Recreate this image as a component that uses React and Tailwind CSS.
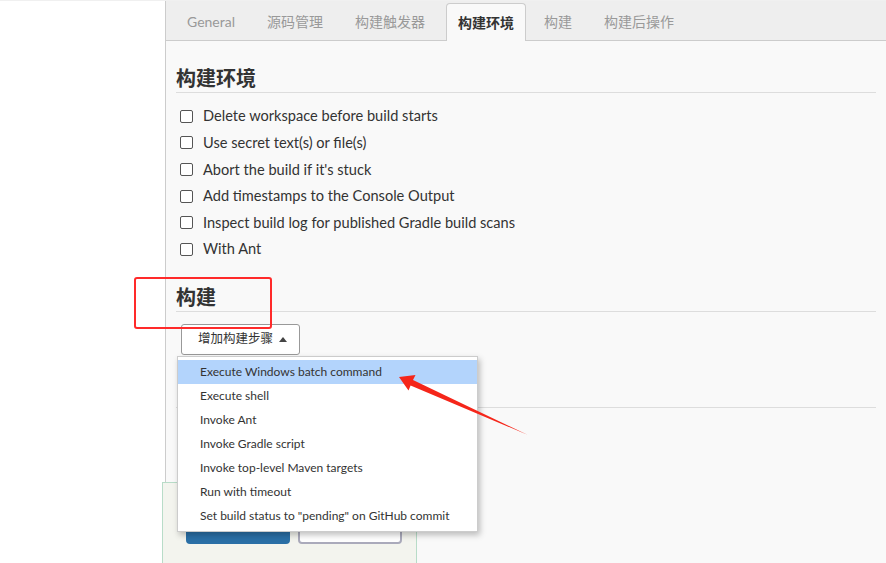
import React from "react";

const tabs = ["General", "源码管理", "构建触发器", "构建环境", "构建", "构建后操作"];
const options = [
  "Delete workspace before build starts",
  "Use secret text(s) or file(s)",
  "Abort the build if it's stuck",
  "Add timestamps to the Console Output",
  "Inspect build log for published Gradle build scans",
  "With Ant",
];
const steps = [
  "Execute Windows batch command",
  "Execute shell",
  "Invoke Ant",
  "Invoke Gradle script",
  "Invoke top-level Maven targets",
  "Run with timeout",
  'Set build status to "pending" on GitHub commit',
];

const font = { fontFamily: 'Lato, "Noto Sans CJK SC", sans-serif' };

const SectionTitle = ({ children, className = "" }) => (
  <div className={`h-[28px] text-[20px] leading-[27px] font-bold text-[#333] border-b border-[#ddd] ${className}`}>
    {children}
  </div>
);

const App = () => {
  return (
    <div style={font} className="relative w-[886px] h-[563px] overflow-hidden bg-white flex border-t border-[#f0f0f0]">
      <div className="w-[165px] shrink-0 bg-white" />

      <div className="flex-1 flex flex-col border-l border-[#ccc] bg-[#f9f9f9]">
        {/* tab bar */}
        <div className="h-[40px] bg-[#eee] border-b border-[#ccc] flex items-end pl-[10px] gap-[10px]">
          {tabs.map((t) =>
            t === "构建环境" ? (
              <div
                key={t}
                className="h-[38px] -mb-px -mr-[3px] px-[11px] flex items-center bg-[#f9f9f9] border border-b-0 border-[#ccc] rounded-t-[4px] text-[14px] font-semibold text-[#333]"
              >
                {t}
              </div>
            ) : (
              <div key={t} className="h-[38px] px-[11px] flex items-center text-[14px] text-[#999]">
                {t}
              </div>
            )
          )}
        </div>

        <div className="px-[10px]">
          <SectionTitle className="mt-[24px]">构建环境</SectionTitle>

          <div className="mt-[10px] pl-[4px]">
            {options.map((o) => (
              <label key={o} className="h-[26.6px] flex items-center gap-[10px] text-[14.6px] text-[#333]">
                <input
                  type="checkbox"
                  className="appearance-none w-[13px] h-[13px] border border-[#555] rounded-[2px] bg-white"
                />
                {o}
              </label>
            ))}
          </div>

          <SectionTitle className="mt-[21px]">构建</SectionTitle>

          <button className="mt-[12px] ml-[5px] h-[31px] w-[119px] flex items-center pl-[16px] gap-[6px] bg-white border border-[#999] rounded-[3px] text-[12.5px] text-[#333]">
            增加构建步骤
            <svg width="8" height="5" viewBox="0 0 8 5">
              <polygon points="0,5 4,0 8,5" fill="#444" />
            </svg>
          </button>

          {/* next section, covered by the menu */}
          <div className="mt-[25px] h-[28px] border-b border-[#ddd]" />
        </div>
      </div>

      {/* bottom save bar */}
      <div className="absolute left-[162px] top-[481px] w-[255px] h-[90px] bg-[#f3f4ee] border border-[#b8dcc8] flex items-start gap-[8px] pl-[23px] pt-[24px]">
        <div className="w-[104px] h-[37px] rounded-[4px] bg-[#2a6fa6]" />
        <div className="w-[104px] h-[37px] rounded-[4px] bg-white border-2 border-[#aab]" />
      </div>

      {/* dropdown menu */}
      <div className="absolute left-[177px] top-[355px] w-[301px] bg-white border border-[#ccc] shadow-[2px_3px_6px_rgba(0,0,0,0.25)] py-[3px]">
        {steps.map((s, i) => (
          <div
            key={s}
            className={`h-[24px] flex items-center pl-[22px] text-[12px] text-[#333] ${i === 0 ? "bg-[#b3d4fc]" : ""}`}
          >
            {s}
          </div>
        ))}
      </div>

      {/* annotation: red box */}
      <div className="absolute left-[134px] top-[276px] w-[138px] h-[52px] border-2 border-[#ff2a2a] rounded-[3px]" />

      {/* annotation: red arrow */}
      <svg className="absolute left-0 top-0 pointer-events-none" width="886" height="563">
        <polygon
          points="399,376 415.5,374 413,379 528,434 410.6,384.5 408.5,389.5"
          fill="#f5261a"
        />
      </svg>
    </div>
  );
};

export default App;
